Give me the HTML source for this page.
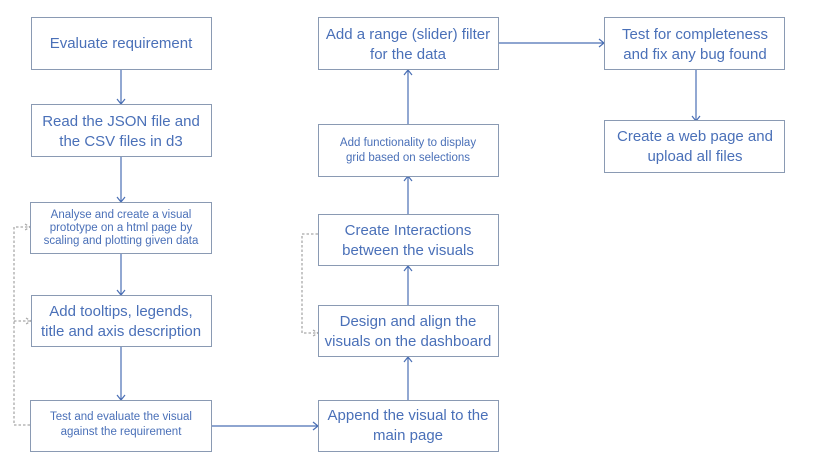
<!DOCTYPE html>
<html><head><meta charset="utf-8"><style>
html,body{margin:0;padding:0;background:#fff;width:816px;height:468px;overflow:hidden}
text{font-family:"Liberation Sans",sans-serif;fill:#4a70b8;text-anchor:middle}
.b{font-size:15px}.s{font-size:11.5px}
rect{fill:#fff;stroke:#8a9ab3;stroke-width:1}
.l{stroke:#4a6fb5;stroke-width:1.2;fill:none}
.d{stroke:#a9a9a9;stroke-width:1.3;fill:none;stroke-dasharray:2.5 2}
</style></head><body>
<svg width="816" height="468" xmlns="http://www.w3.org/2000/svg">
<path class="l" d="M121 70V104M117 99l4 5 4-5"/>
<path class="l" d="M121 157V202M117 197l4 5 4-5"/>
<path class="l" d="M121 254V295M117 290l4 5 4-5"/>
<path class="l" d="M121 347V400M117 395l4 5 4-5"/>
<path class="l" d="M211 426H318M313 422l5 4-5 4"/>
<path class="l" d="M408 400V357M404 362l4-5 4 5"/>
<path class="l" d="M408 305V266M404 271l4-5 4 5"/>
<path class="l" d="M408 215V176M404 181l4-5 4 5"/>
<path class="l" d="M408 124V70M404 75l4-5 4 5"/>
<path class="l" d="M499 43H604M599 39l5 4-5 4"/>
<path class="l" d="M696 70V121M692 116l4 5 4-5"/>
<path class="d" d="M30 425H14V227H30M25 224l5 3-5 3M14 321H31M26 318l5 3-5 3"/>
<path class="d" d="M318 234H302V333H318M313 330l5 3-5 3"/>
<rect x="31.5" y="17.5" width="180" height="52"/>
<text class="b" x="121" y="48">Evaluate requirement</text>
<rect x="31.5" y="104.5" width="180" height="52"/>
<text class="b" x="121" y="126">Read the JSON file and</text>
<text class="b" x="121" y="146">the CSV files in d3</text>
<rect x="30.5" y="202.5" width="181" height="51"/>
<text class="s" x="121" y="218">Analyse and create a visual</text>
<text class="s" x="121" y="231">prototype on a html page by</text>
<text class="s" x="121" y="244">scaling and plotting given data</text>
<rect x="31.5" y="295.5" width="180" height="51"/>
<text class="b" x="121" y="316">Add tooltips, legends,</text>
<text class="b" x="121" y="336">title and axis description</text>
<rect x="30.5" y="400.5" width="181" height="51"/>
<text class="s" x="121" y="420">Test and evaluate the visual</text>
<text class="s" x="121" y="435">against the requirement</text>
<rect x="318.5" y="400.5" width="180" height="51"/>
<text class="b" x="408" y="420">Append the visual to the</text>
<text class="b" x="408" y="440">main page</text>
<rect x="318.5" y="305.5" width="180" height="51"/>
<text class="b" x="408" y="326">Design and align the</text>
<text class="b" x="408" y="346">visuals on the dashboard</text>
<rect x="318.5" y="214.5" width="180" height="51"/>
<text class="b" x="408" y="235">Create Interactions</text>
<text class="b" x="408" y="255">between the visuals</text>
<rect x="318.5" y="124.5" width="180" height="52"/>
<text class="s" x="408" y="146">Add functionality to display</text>
<text class="s" x="408" y="161">grid based on selections</text>
<rect x="318.5" y="17.5" width="180" height="52"/>
<text class="b" x="408" y="39">Add a range (slider) filter</text>
<text class="b" x="408" y="59">for the data</text>
<rect x="604.5" y="17.5" width="180" height="52"/>
<text class="b" x="695" y="39">Test for completeness</text>
<text class="b" x="695" y="59">and fix any bug found</text>
<rect x="604.5" y="120.5" width="180" height="52"/>
<text class="b" x="695" y="141">Create a web page and</text>
<text class="b" x="695" y="161">upload all files</text>
</svg>
</body></html>
